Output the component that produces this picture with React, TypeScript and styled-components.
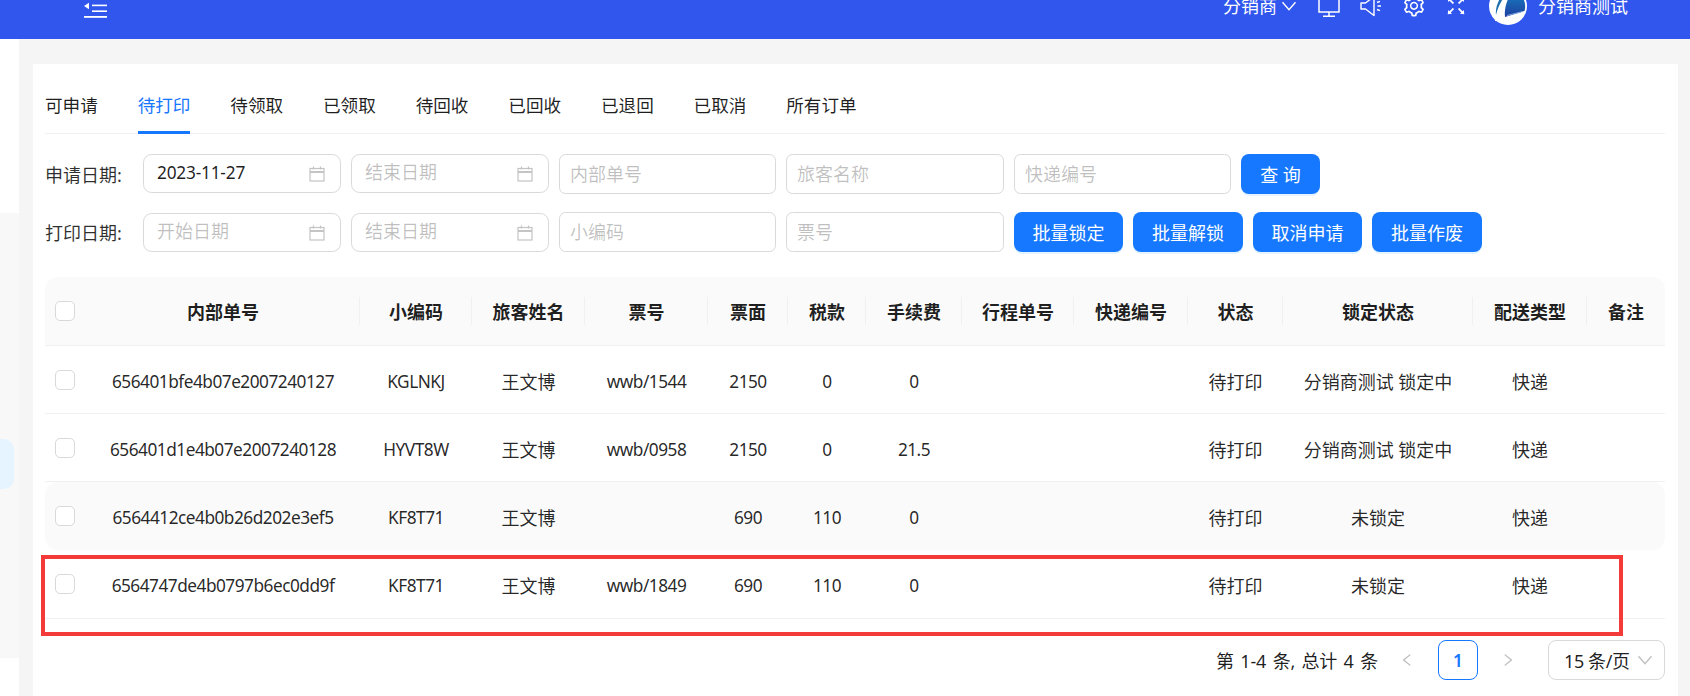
import React from "react";
import styled, { createGlobalStyle } from "styled-components";
import { AiOutlineSetting, AiOutlineFullscreen, AiOutlineLeft, AiOutlineRight } from "react-icons/ai";

const Global = createGlobalStyle`
  html, body { margin: 0; padding: 0; background: #f5f5f5; }
  body {
    font-family: "Noto Sans", "Noto Sans CJK SC", sans-serif;
    font-size: 18px;
    color: rgba(0,0,0,0.88);
  }
  * { box-sizing: border-box; }
`;

const Page = styled.div`
  position: relative;
  width: 1690px;
  height: 696px;
  overflow: hidden;
  display: flex;
  flex-direction: column;
`;

const TopBar = styled.header`
  flex: none;
  height: 39px;
  background: #3056ee;
  color: #fff;
  overflow: hidden;
`;

const TopInner = styled.div`
  height: 64px;
  margin-top: -26px;
  padding: 0 62px 0 84px;
  display: flex;
  align-items: center;
`;

const FoldIcon = styled.svg`
  width: 24px;
  height: 16px;
  margin-top: 8px;
  flex: none;
`;

const TopSpacer = styled.div`
  flex: 1;
`;

const TopLabel = styled.span`
  font-size: 18px;
  line-height: 24px;
  white-space: nowrap;
`;

const Chevron = styled.svg<{ $tone: string; $m: string }>`
  flex: none;
  width: 16px;
  height: 10px;
  margin: ${(p) => p.$m};
  color: ${(p) => p.$tone};
`;

const TopIcon = styled.svg`
  flex: none;
  width: 22px;
  height: 22px;
  margin-right: 20px;
`;

const GearIcon = styled(AiOutlineSetting)`
  flex: none;
  width: 24px;
  height: 24px;
  margin-right: 18px;
`;

const FullIcon = styled(AiOutlineFullscreen)`
  flex: none;
  width: 24px;
  height: 24px;
  margin-right: 21px;
`;

const Avatar = styled.svg`
  flex: none;
  width: 38px;
  height: 38px;
  margin-right: 11px;
`;

const Body = styled.div`
  flex: 1;
  display: flex;
  min-height: 0;
`;

const Side = styled.aside`
  flex: none;
  width: 19px;
  background: #fff;
  padding-top: 174px;
`;

const SideList = styled.div`
  height: 445px;
  background: #f8f8f8;
  padding-top: 226px;
`;

const SideActive = styled.div`
  width: 14px;
  height: 50px;
  background: #e6f4ff;
  border-radius: 0 10px 10px 0;
`;

const Content = styled.main`
  flex: 1;
  padding: 25px 12px 0 14px;
  display: flex;
  min-width: 0;
`;

const Card = styled.section`
  flex: 1;
  background: #fff;
  padding: 16px 13px 0 12px;
  min-width: 0;
`;

const Tabs = styled.nav`
  display: flex;
  gap: 39.87px;
  height: 54px;
  border-bottom: 1px solid #f0f0f0;
`;

const Tab = styled.div<{ $active?: boolean }>`
  height: 54px;
  padding-bottom: 3px;
  display: flex;
  align-items: center;
  font-size: 17.6px;
  white-space: nowrap;
  color: ${(p) => (p.$active ? "#1677ff" : "rgba(0,0,0,0.88)")};
  border-bottom: 3px solid ${(p) => (p.$active ? "#1677ff" : "transparent")};
`;

const FilterRow = styled.div<{ $bottom?: boolean }>`
  display: flex;
  gap: 10px;
  height: 40px;
  margin-top: ${(p) => (p.$bottom ? "18px" : "20px")};
  align-items: ${(p) => (p.$bottom ? "flex-end" : "flex-start")};
`;

const Label = styled.label`
  width: 88px;
  align-self: center;
  font-size: 18px;
  white-space: nowrap;
  color: rgba(0,0,0,0.82);
`;

const DateBox = styled.div`
  width: 198px;
  height: 39px;
  display: flex;
  align-items: center;
  padding: 0 15px 0 13px;
  border: 1px solid #d9d9d9;
  border-radius: 8.6px;
  background: #fff;
`;

const DateInput = styled.input`
  flex: 1;
  min-width: 0;
  border: 0;
  outline: 0;
  padding: 0 0 3px;
  background: transparent;
  font: inherit;
  font-size: 17.25px;
  letter-spacing: -0.2px;
  color: rgba(0,0,0,0.88);
  &::placeholder { color: rgba(0,0,0,0.25); letter-spacing: 0; font-size: 18px; }
`;

const CalendarIcon = styled.svg`
  flex: none;
  width: 16px;
  height: 16px;
  color: #c4c4c4;
`;

const TextInput = styled.input<{ $w: number }>`
  width: ${(p) => p.$w}px;
  height: 40px;
  padding: 0 10px;
  border: 1px solid #d9d9d9;
  border-radius: 6.5px;
  outline: 0;
  background: #fff;
  font: inherit;
  font-size: 18px;
  &::placeholder { color: rgba(0,0,0,0.25); }
`;

const Button = styled.button<{ $w: number }>`
  width: ${(p) => p.$w}px;
  height: 40px;
  padding: 0;
  border: 0;
  border-radius: 8px;
  background: #1677ff;
  box-shadow: 0 2px 0 rgba(5,145,255,0.1);
  color: #fff;
  font: inherit;
  font-size: 18px;
  white-space: nowrap;
`;

const Table = styled.table`
  width: 1620px;
  margin-top: 25px;
  table-layout: fixed;
  border-collapse: separate;
  border-spacing: 0;
`;

const Th = styled.th<{ $sep?: boolean }>`
  position: relative;
  height: 69px;
  padding: 0;
  background: #fafafa;
  border-bottom: 1px solid #f0f0f0;
  font-size: 18px;
  font-weight: 600;
  text-align: center;
  white-space: nowrap;
  color: rgba(0,0,0,0.88);
  &:first-child { border-top-left-radius: 13px; }
  &:last-child { border-top-right-radius: 13px; }
  &::after {
    content: ${(p) => (p.$sep ? '""' : "none")};
    position: absolute;
    right: 0;
    top: 20px;
    width: 1.5px;
    height: 28px;
    background: #f0f0f0;
  }
`;

const Tr = styled.tr<{ $hover?: boolean }>`
  & > td {
    background: ${(p) => (p.$hover ? "#fafafa" : "#fff")};
    border-bottom: 1px solid ${(p) => (p.$hover ? "#fafafa" : "#f0f0f0")};
  }
  & > td:first-child { border-radius: ${(p) => (p.$hover ? "13px 0 0 13px" : "0")}; }
  & > td:last-child { border-radius: ${(p) => (p.$hover ? "0 13px 13px 0" : "0")}; }
`;

const Td = styled.td`
  padding: 2px 0 0;
  font-size: 18px;
  text-align: center;
  white-space: nowrap;
  color: rgba(0,0,0,0.86);
`;

const CheckCell = styled.td<{ $h?: number }>`
  height: ${(p) => p.$h ?? 68}px;
  padding: 0;
`;

const Latin = styled.span`
  font-size: 17.25px;
  letter-spacing: -0.5px;
`;

const CheckBox = styled.span`
  display: block;
  width: 20px;
  height: 20px;
  margin-left: 10px;
  border: 1px solid #d9d9d9;
  border-radius: 5px;
  background: #fff;
`;

const Pager = styled.div`
  display: flex;
  justify-content: flex-end;
  align-items: center;
  margin-top: 21px;
  height: 40px;
`;

const PagerTotal = styled.span`
  margin-right: 9px;
  font-size: 18px;
  letter-spacing: -0.2px;
  word-spacing: 2px;
  white-space: nowrap;
`;

const PagerArrow = styled.span`
  width: 40px;
  height: 40px;
  display: flex;
  align-items: center;
  justify-content: center;
  color: rgba(0,0,0,0.25);
  font-size: 16px;
`;

const PagerItem = styled.span`
  width: 40px;
  height: 40px;
  margin: 0 10px 0 11px;
  display: flex;
  align-items: center;
  justify-content: center;
  border: 1px solid #1677ff;
  border-radius: 8px;
  color: #1677ff;
  font-size: 17.25px;
  font-weight: 600;
`;

const PagerSelect = styled.div`
  width: 117px;
  height: 40px;
  margin-left: 20px;
  padding: 0 11px 0 15px;
  display: flex;
  align-items: center;
  justify-content: space-between;
  border: 1px solid #d9d9d9;
  border-radius: 8px;
  font-size: 18px;
  letter-spacing: -0.4px;
  white-space: nowrap;
`;

const Highlight = styled.div`
  position: absolute;
  left: 41px;
  top: 555px;
  width: 1582px;
  height: 81px;
  border: 4px solid #f53a3a;
  pointer-events: none;
`;

const Calendar = () => (
  <CalendarIcon viewBox="0 0 16 16" fill="none" stroke="currentColor">
    <rect x="1" y="2.5" width="14" height="12.5" strokeWidth="1.2" />
    <path d="M1 6h14" strokeWidth="2" />
    <path d="M4.5 .5v3M11.5 .5v3" strokeWidth="1.2" />
  </CalendarIcon>
);

const Down = ({ tone, m }: { tone: string; m: string }) => (
  <Chevron $tone={tone} $m={m} viewBox="0 0 16 10" fill="none" stroke="currentColor" strokeWidth="1.4">
    <path d="M1.5 1.2 8 8.6l6.5-7.4" />
  </Chevron>
);

const tabs = ["可申请", "待打印", "待领取", "已领取", "待回收", "已回收", "已退回", "已取消", "所有订单"];
const widths = [41, 274, 112, 113, 123, 80, 78, 96, 112, 114, 95, 190, 114, 78];
const heads = ["内部单号", "小编码", "旅客姓名", "票号", "票面", "税款", "手续费", "行程单号", "快递编号", "状态", "锁定状态", "配送类型", "备注"];

type Row = { id: string; code: string; ticket: string; face: string; tax: string; fee: string; lock: string; hover?: boolean; h?: number };
const rows: Row[] = [
  { id: "656401bfe4b07e2007240127", code: "KGLNKJ", ticket: "wwb/1544", face: "2150", tax: "0", fee: "0", lock: "分销商测试 锁定中" },
  { id: "656401d1e4b07e2007240128", code: "HYVT8W", ticket: "wwb/0958", face: "2150", tax: "0", fee: "21.5", lock: "分销商测试 锁定中" },
  { id: "6564412ce4b0b26d202e3ef5", code: "KF8T71", ticket: "", face: "690", tax: "110", fee: "0", lock: "未锁定", hover: true },
  { id: "6564747de4b0797b6ec0dd9f", code: "KF8T71", ticket: "wwb/1849", face: "690", tax: "110", fee: "0", lock: "未锁定", h: 69 },
];

export default function App() {
  return (
    <Page>
      <Global />
      <TopBar>
        <TopInner>
          <FoldIcon viewBox="0 0 24 16" fill="#fff">
            <path d="M0 4 L5 .8 V7.2 Z" />
            <rect x="8" y="2.6" width="15" height="1.6" />
            <rect x="8" y="8.4" width="15" height="1.6" />
            <rect x="0" y="14" width="23" height="1.8" />
          </FoldIcon>
          <TopSpacer />
          <TopLabel>分销商</TopLabel>
          <Down tone="#fff" m="0 21px 0 4px" />
          <TopIcon viewBox="0 0 22 22" fill="none" stroke="#fff" strokeWidth="1.5">
            <rect x="1" y="-6" width="20" height="23" />
            <path d="M11 17v4M5 21.2h12" />
          </TopIcon>
          <TopIcon viewBox="0 0 22 22" fill="none" stroke="#fff" strokeWidth="1.4">
            <path d="M1 8h4.5L14 1.5v19L5.5 14H1z" strokeLinejoin="round" />
            <path d="M17 7.5l3-1.2M17.5 11H21M17 14.5l3 1.2" />
          </TopIcon>
          <GearIcon />
          <FullIcon />
          <Avatar viewBox="0 0 38 38">
            <defs>
              <linearGradient id="logoBlue" x1="0" y1="0" x2="0" y2="1">
                <stop offset="0" stopColor="#1584c4" />
                <stop offset="1" stopColor="#1f3f9e" />
              </linearGradient>
            </defs>
            <circle cx="19" cy="19" r="19" fill="#fff" />
            <path d="M24 3 A17 17 0 0 1 35.5 24 L16 30 C15 21 18 12 24 3 Z" fill="url(#logoBlue)" />
            <path d="M17 3 C10 11 6 20 7 28 C9 20 13 11 21 3 Z" fill="#1f6fae" />
            <path d="M18 28.5 L34 24.5" fill="none" stroke="#7ea6de" strokeWidth="1.2" />
            <path d="M6 33 C16 33 27 30 36 25" fill="none" stroke="#fff" strokeWidth="2" />
          </Avatar>
          <TopLabel>分销商测试</TopLabel>
        </TopInner>
      </TopBar>
      <Body>
        <Side>
          <SideList>
            <SideActive />
          </SideList>
        </Side>
        <Content>
          <Card>
            <Tabs>
              {tabs.map((t) => (
                <Tab key={t} $active={t === "待打印"}>{t}</Tab>
              ))}
            </Tabs>
            <FilterRow>
              <Label>申请日期:</Label>
              <DateBox><DateInput readOnly defaultValue="2023-11-27" /><Calendar /></DateBox>
              <DateBox><DateInput readOnly placeholder="结束日期" /><Calendar /></DateBox>
              <TextInput $w={217} readOnly placeholder="内部单号" />
              <TextInput $w={218} readOnly placeholder="旅客名称" />
              <TextInput $w={217} readOnly placeholder="快递编号" />
              <Button $w={79}>查 询</Button>
            </FilterRow>
            <FilterRow $bottom>
              <Label>打印日期:</Label>
              <DateBox><DateInput readOnly placeholder="开始日期" /><Calendar /></DateBox>
              <DateBox><DateInput readOnly placeholder="结束日期" /><Calendar /></DateBox>
              <TextInput $w={217} readOnly placeholder="小编码" />
              <TextInput $w={218} readOnly placeholder="票号" />
              <Button $w={109}>批量锁定</Button>
              <Button $w={110}>批量解锁</Button>
              <Button $w={109}>取消申请</Button>
              <Button $w={110}>批量作废</Button>
            </FilterRow>
            <Table>
              <colgroup>
                {widths.map((w, i) => (
                  <col key={i} style={{ width: w }} />
                ))}
              </colgroup>
              <thead>
                <tr>
                  <Th><CheckBox /></Th>
                  {heads.map((h, i) => (
                    <Th key={h} $sep={i < heads.length - 1}>{h}</Th>
                  ))}
                </tr>
              </thead>
              <tbody>
                {rows.map((r) => (
                  <Tr key={r.id} $hover={r.hover}>
                    <CheckCell $h={r.h}><CheckBox /></CheckCell>
                    <Td><Latin>{r.id}</Latin></Td>
                    <Td><Latin>{r.code}</Latin></Td>
                    <Td>王文博</Td>
                    <Td><Latin>{r.ticket}</Latin></Td>
                    <Td><Latin>{r.face}</Latin></Td>
                    <Td><Latin>{r.tax}</Latin></Td>
                    <Td><Latin>{r.fee}</Latin></Td>
                    <Td />
                    <Td />
                    <Td>待打印</Td>
                    <Td>{r.lock}</Td>
                    <Td>快递</Td>
                    <Td />
                  </Tr>
                ))}
              </tbody>
            </Table>
            <Pager>
              <PagerTotal>第 1-4 条, 总计 4 条</PagerTotal>
              <PagerArrow><AiOutlineLeft /></PagerArrow>
              <PagerItem>1</PagerItem>
              <PagerArrow><AiOutlineRight /></PagerArrow>
              <PagerSelect>15 条/页<Down tone="rgba(0,0,0,0.25)" m="0" /></PagerSelect>
            </Pager>
          </Card>
        </Content>
      </Body>
      <Highlight />
    </Page>
  );
}
